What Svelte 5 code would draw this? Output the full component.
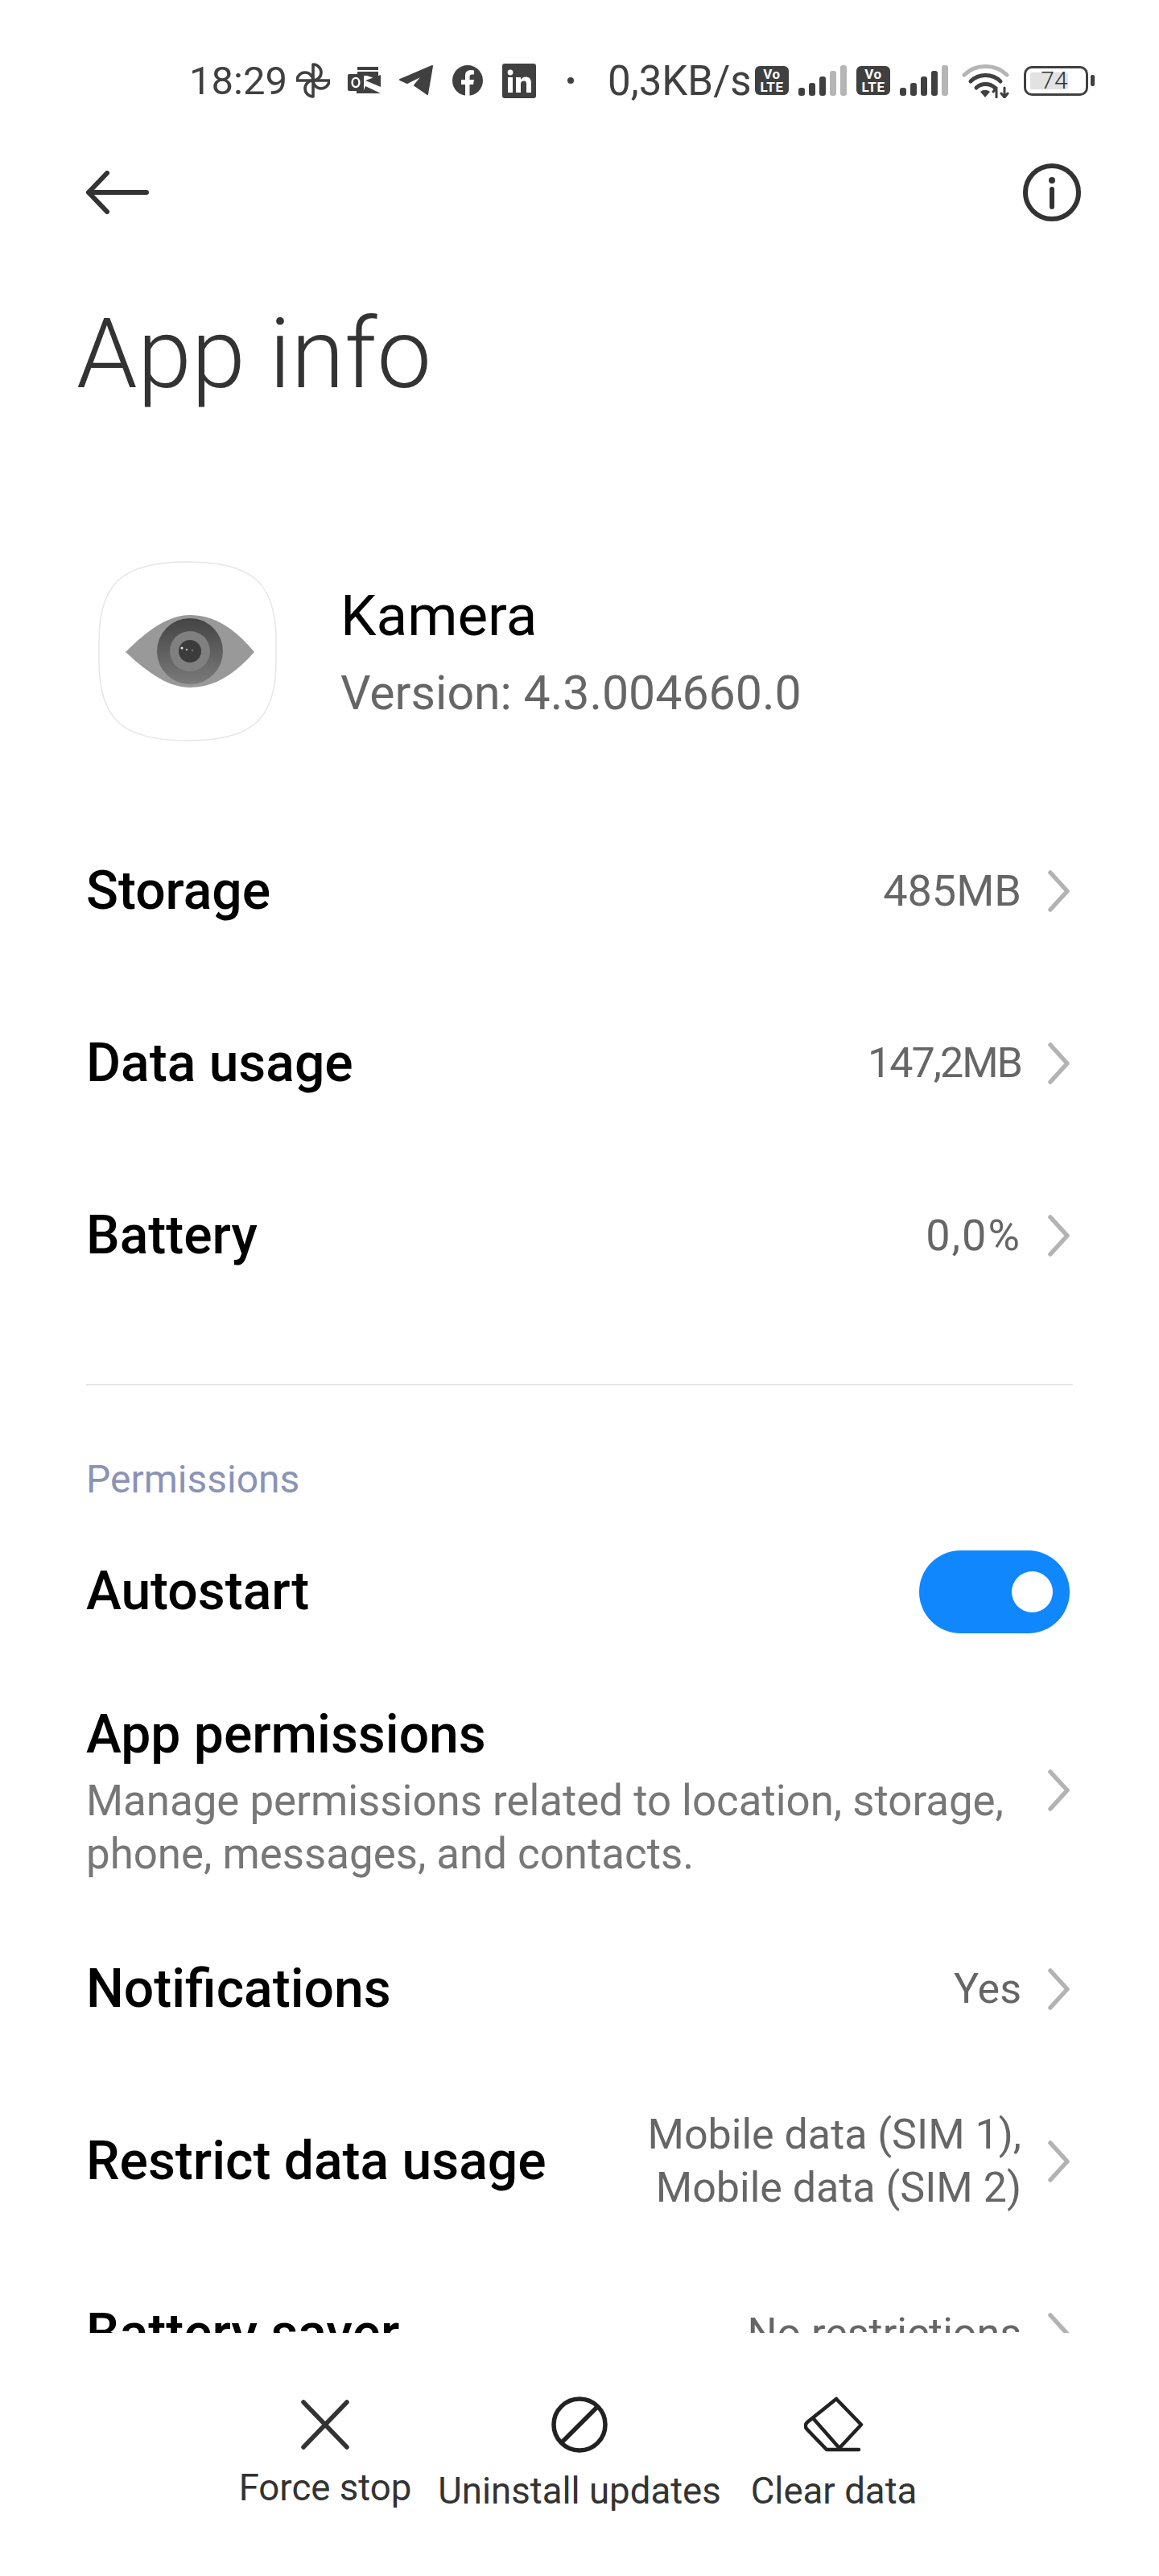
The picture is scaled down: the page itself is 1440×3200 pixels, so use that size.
<script>
  const rows1 = [
    { label: 'Storage', value: '485MB', cls: 'v-a' },
    { label: 'Data usage', value: '147,2MB', cls: 'v-b' },
    { label: 'Battery', value: '0,0%', cls: 'v-c' }
  ];
  const bars = [10, 16, 24, 31, 38];
  const actions = ['Force stop', 'Uninstall updates', 'Clear data'];
</script>

{#snippet chevron()}
  <svg class="chev" width="27" height="52" viewBox="0 0 27 52"><path d="M3 3 L24 26 L3 49" fill="none" stroke="#b3b3b3" stroke-width="5.5" stroke-linecap="round" stroke-linejoin="round" /></svg>
{/snippet}

{#snippet signal(dark)}
  <svg width="60" height="38" viewBox="0 0 60 38">
    {#each bars as h, i}
      <rect x={i * 13} y={38 - h} width="8" height={h} rx="3" fill={i < dark ? '#404040' : '#b5b5b5'} />
    {/each}
  </svg>
{/snippet}

<div class="page">
  <div class="status">
    <span class="time">18:29</span>
    <svg class="i-fan" width="42" height="44" viewBox="0 0 42 44" fill="none" stroke="#404040" stroke-width="3.6" stroke-linejoin="round">
      <path d="M21 22 V2 a10 10 0 0 1 0 20 Z" transform="rotate(0 21 22)" />
      <path d="M21 22 V2 a10 10 0 0 1 0 20 Z" transform="rotate(90 21 22)" />
      <path d="M21 22 V2 a10 10 0 0 1 0 20 Z" transform="rotate(180 21 22)" />
      <path d="M21 22 V2 a10 10 0 0 1 0 20 Z" transform="rotate(270 21 22)" />
    </svg>
    <svg class="i-ol" width="42" height="34" viewBox="0 0 42 34">
      <path d="M12 0 H38 V4 H12 Z M12 6 H38 V16 L24 11 H12 Z" fill="#404040" />
      <path d="M22 17 L41 10 V25 Z M22 24 L41 33 H11 V29 H20 Z" fill="#404040" />
      <rect x="0" y="9" width="20" height="21" rx="2" fill="#404040" />
      <ellipse cx="10" cy="19.5" rx="4.4" ry="5.6" fill="none" stroke="#fff" stroke-width="2.4" />
    </svg>
    <svg class="i-tg" width="42" height="38" viewBox="0 0 42 38"><path d="M41 1 L35 36 L19 25 L30 12 L10 22 L1 18 Z" fill="#404040" stroke="#404040" stroke-width="2" stroke-linejoin="round" /></svg>
    <svg class="i-fb" width="38" height="38" viewBox="0 0 38 38">
      <circle cx="19" cy="19" r="19" fill="#404040" />
      <path d="M16 38 V24 H11 V18 H16 V13 C16 8 19 6 23 6 C25 6 27 6.500 27 6.500 V11.500 H24.500 C22.500 11.500 21.500 12.500 21.500 14.500 V18 H27 L26 24 H21.500 V38 Z" fill="#fff" />
    </svg>
    <svg class="i-li" width="42" height="43" viewBox="0 0 42 43">
      <rect width="42" height="43" rx="3" fill="#404040" />
      <circle cx="10" cy="11" r="3.400" fill="#fff" />
      <rect x="7" y="17" width="6" height="19" fill="#fff" />
      <path d="M17 17 H23 V20 C24.500 17.500 27 16.500 29 16.500 C34 16.500 36 19.500 36 24 V36 H30 V25 C30 22.500 29 21.500 27 21.500 C24.500 21.500 23 23 23 25.500 V36 H17 Z" fill="#fff" />
    </svg>
    <span class="dot"></span>
    <span class="speed">0,3KB/s</span>
    <span class="volte"><b>Vo</b><b>LTE</b></span>
    {@render signal(3)}
    <span class="volte v2"><b>Vo</b><b>LTE</b></span>
    {@render signal(4)}
    <svg class="i-wifi" width="59" height="44" viewBox="0 0 59 44" fill="none" stroke-linecap="round">
      <path d="M3 15 C17 1 42 1 56 15" stroke="#b5b5b5" stroke-width="5" />
      <path d="M11 23 C21 13 38 13 48 23" stroke="#404040" stroke-width="5" />
      <path d="M18 31 C24 25 35 25 41 31" stroke="#404040" stroke-width="5" />
      <path d="M23 36 L29 43 L35 36 C31 33 27 33 23 36 Z" fill="#404040" />
      <path d="M43 31 V43 M39 36 L43 31 M53 43 V31 M49 38 L53 43 L57 38" stroke="#404040" stroke-width="3" />
    </svg>
    <span class="batt"><span class="batt-fill"></span><span class="batt-num">74</span></span>
    <span class="nub"></span>
  </div>

  <div class="toolbar">
    <svg width="78" height="54" viewBox="0 0 78 54" fill="none" stroke="#333" stroke-width="6" stroke-linecap="round" stroke-linejoin="round"><path d="M75 27 H3 M26 3 L3 27 L26 51" /></svg>
    <svg width="74" height="74" viewBox="0 0 74 74" fill="none" stroke="#333" stroke-width="6"><circle cx="37" cy="37" r="33" /><path d="M37 33 V55" stroke-linecap="round" /><circle cx="37" cy="22" r="4" fill="#333" stroke="none" /></svg>
  </div>

  <h1>App info</h1>

  <div class="apphead">
    <svg width="224" height="226" viewBox="0 0 224 226">
      <defs>
        <linearGradient id="iris" x1="0" y1="0" x2="0" y2="1">
          <stop offset="0%" stop-color="#444" />
          <stop offset="100%" stop-color="#7a7a7a" />
        </linearGradient>
      </defs>
      <path d="M112 2 C190 2 222 26 222 100 V126 C222 200 190 224 112 224 C34 224 2 200 2 126 V100 C2 26 34 2 112 2 Z" fill="#fff" stroke="#e6e6e6" stroke-width="1.500" />
      <path d="M35 114 C65 84 90 68 115 68 C145 68 170 84 195 114 C170 142 145 158 115 158 C90 158 65 142 35 114 Z" fill="#999" />
      <circle cx="115" cy="113" r="41" fill="url(#iris)" />
      <circle cx="115" cy="113" r="25" fill="#808080" />
      <circle cx="115" cy="113" r="14" fill="#3c3c3c" />
      <circle cx="105" cy="109" r="1.500" fill="#eee" />
      <circle cx="111" cy="111" r="1.200" fill="#bbb" />
      <circle cx="118" cy="112" r="1.200" fill="#777" />
    </svg>
    <div class="appmeta">
      <div class="appname">Kamera</div>
      <div class="appver">Version: 4.3.004660.0</div>
    </div>
  </div>

  <div class="list">
    {#each rows1 as r}
      <div class="row">
        <span class="label">{r.label}</span>
        <span class="value {r.cls}">{r.value}</span>
        {@render chevron()}
      </div>
    {/each}

    <div class="divider"></div>
    <div class="section">Permissions</div>

    <div class="row">
      <span class="label">Autostart</span>
      <span class="toggle"><span class="knob"></span></span>
    </div>

    <div class="row tall">
      <div class="stack">
        <div class="label">App permissions</div>
        <div class="desc">Manage permissions related to location, storage, phone, messages, and contacts.</div>
      </div>
      {@render chevron()}
    </div>

    <div class="row">
      <span class="label">Notifications</span>
      <span class="value">Yes</span>
      {@render chevron()}
    </div>

    <div class="row">
      <span class="label">Restrict data usage</span>
      <span class="value">Mobile data (SIM 1),<br />Mobile data (SIM 2)</span>
      {@render chevron()}
    </div>

    <div class="row">
      <span class="label">Battery saver</span>
      <span class="value">No restrictions</span>
      {@render chevron()}
    </div>
  </div>

  <div class="actions">
    {#each actions as a, i}
      <div class="action">
        <div class="a-icon">
          {#if i === 0}
            <svg width="60" height="62" viewBox="0 0 60 62" fill="none" stroke="#333" stroke-width="5.500" stroke-linecap="round"><path d="M3 3 L57 59 M57 3 L3 59" /></svg>
          {:else if i === 1}
            <svg width="70" height="70" viewBox="0 0 70 70" fill="none" stroke="#222" stroke-width="5.500"><circle cx="35" cy="35" r="32" /><path d="M12 58 L58 12" /></svg>
          {:else}
            <svg width="74" height="70" viewBox="0 0 74 70" fill="none" stroke="#222" stroke-width="4.500" stroke-linejoin="round" stroke-linecap="round"><path d="M40 3 L71 35 L44 64 M40 3 L4 32 Q0 36 3 40 L28 66 H68 M12 28 L42 62" /></svg>
          {/if}
        </div>
        <div class="a-label" class:first={i === 0}>{a}</div>
      </div>
    {/each}
  </div>
</div>

<style>
  :global(body) {
    margin: 0;
    background: #fff;
  }
  .page {
    width: 1440px;
    height: 3200px;
    display: flex;
    flex-direction: column;
    overflow: hidden;
    background: #fff;
    font-family: Roboto, "Liberation Sans", sans-serif;
    color: #000;
  }
  .status {
    height: 140px;
    padding: 30px 0 0 235px;
    display: flex;
    align-items: center;
    color: #404040;
    flex-shrink: 0;
  }
  .time {
    font-size: 49px;
    width: 133px;
  }
  .i-ol { margin-left: 22px; }
  .i-tg { margin-left: 22px; }
  .i-fb { margin-left: 24px; }
  .i-li { margin-left: 24px; }
  .dot {
    width: 8px;
    height: 8px;
    border-radius: 50%;
    background: #404040;
    margin-left: 39px;
  }
  .speed {
    font-size: 51px;
    margin-left: 42px;
    width: 183px;
    white-space: nowrap;
  }
  .volte {
    width: 42px;
    height: 36px;
    background: #404040;
    border-radius: 6px;
    color: #fff;
    display: flex;
    flex-direction: column;
    align-items: center;
    justify-content: center;
    margin-right: 12px;
  }
  .volte.v2 { margin-left: 12px; }
  .volte b {
    font-size: 17px;
    line-height: 16px;
    font-weight: 700;
    letter-spacing: 0.5px;
  }
  .i-wifi { margin-left: 17px; }
  .batt {
    position: relative;
    width: 80px;
    height: 37px;
    margin-left: 18px;
    box-sizing: border-box;
    border: 3.500px solid #404040;
    border-radius: 10px;
    display: flex;
    align-items: center;
    justify-content: center;
  }
  .batt-fill {
    position: absolute;
    left: 5px;
    top: 5px;
    bottom: 5px;
    width: 47px;
    background: #e2e2e2;
    border-radius: 3px;
  }
  .batt-num {
    position: relative;
    font-size: 30px;
    font-weight: 300;
    line-height: 30px;
    margin-left: -4px;
    color: #333;
  }
  .nub {
    width: 5px;
    height: 14px;
    background: #404040;
    border-radius: 2px;
    margin-left: 3px;
  }
  .toolbar {
    height: 138px;
    padding: 0 96px 0 107px;
    display: flex;
    align-items: center;
    justify-content: space-between;
    flex-shrink: 0;
  }
  h1 {
    margin: 62px 0 0;
    padding-left: 95px;
    font-size: 121px;
    line-height: 140px;
    font-weight: 300;
    color: #333;
    flex-shrink: 0;
  }
  .apphead {
    margin-top: 186px;
    padding-left: 121px;
    height: 226px;
    display: flex;
    align-items: center;
    gap: 78px;
    flex-shrink: 0;
  }
  .appname {
    font-size: 71px;
    line-height: 84px;
    font-weight: 450;
  }
  .appver {
    margin-top: 19px;
    font-size: 59px;
    line-height: 70px;
    color: #666;
  }
  .list {
    flex: 1;
    min-height: 0;
    overflow: hidden;
    margin-top: 78px;
    padding: 0 107px;
  }
  .row {
    height: 214px;
    display: flex;
    align-items: center;
  }
  .row.tall { height: 280px; }
  .label {
    font-size: 66px;
    line-height: 84px;
    font-weight: 470;
    color: #000;
  }
  .value {
    margin-left: auto;
    font-size: 52px;
    line-height: 66px;
    color: #666;
    text-align: right;
  }
  .v-a { font-size: 54px; }
  .v-b { letter-spacing: -2px; }
  .v-c { font-size: 54px; letter-spacing: 2px; }
  .chev {
    margin-left: 33px;
    margin-right: 4px;
    flex-shrink: 0;
  }
  .divider {
    height: 2px;
    background: #e5e5e5;
    margin-top: 77px;
  }
  .section {
    height: 149px;
    box-sizing: border-box;
    padding-top: 86px;
    font-size: 48px;
    line-height: 62px;
    color: #8a93b6;
  }
  .toggle {
    margin-left: auto;
    margin-right: 4px;
    width: 187px;
    height: 103px;
    border-radius: 52px;
    background: #1187fe;
    display: flex;
    align-items: center;
    justify-content: flex-end;
    padding-right: 21px;
    box-sizing: border-box;
  }
  .knob {
    width: 51px;
    height: 51px;
    border-radius: 50%;
    background: #fff;
  }
  .stack {
    flex: 1;
    min-width: 0;
  }
  .desc {
    margin-top: 7px;
    font-size: 52.8px;
    line-height: 66px;
    color: #777;
  }
  .actions {
    height: 302px;
    flex-shrink: 0;
    display: grid;
    grid-template-columns: repeat(3, 316px);
    justify-content: center;
    padding-top: 78px;
    box-sizing: border-box;
  }
  .action {
    display: flex;
    flex-direction: column;
    align-items: center;
  }
  .a-icon {
    height: 72px;
    display: flex;
    align-items: center;
    justify-content: center;
  }
  .a-label {
    margin-top: 17px;
    font-size: 45.6px;
    line-height: 60px;
    color: #333;
    white-space: nowrap;
  }
  .a-label.first { margin-top: 13px; }
</style>
